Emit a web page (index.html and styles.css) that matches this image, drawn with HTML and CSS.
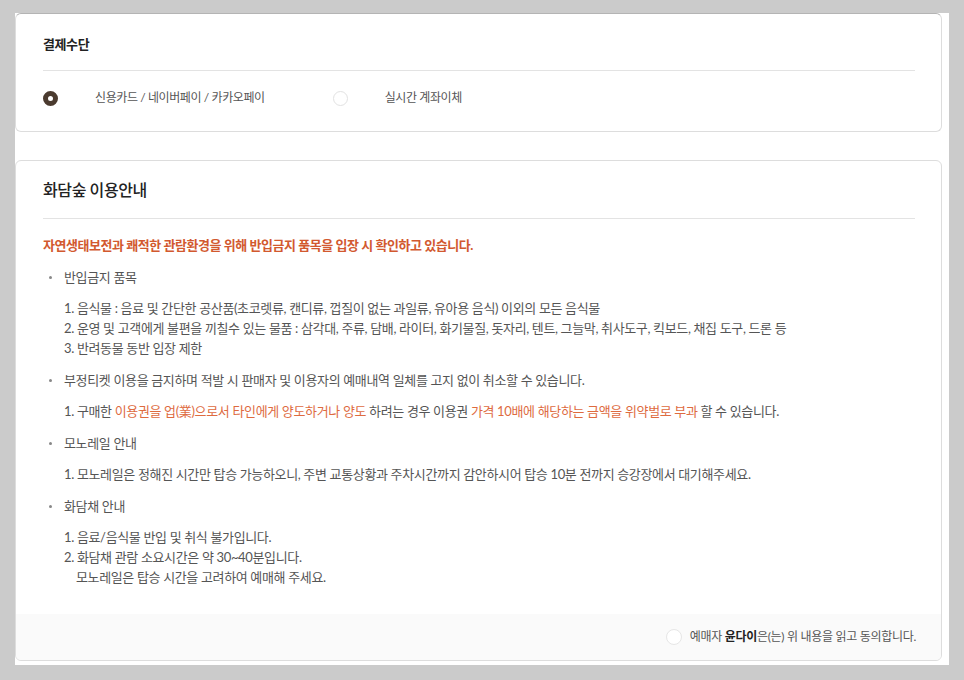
FILE: index.html
```html
<!DOCTYPE html>
<html lang="ko">
<head>
    <meta charset="UTF-8">
    <meta name="viewport" content="width=device-width, initial-scale=1.0">
    <title>예매 - 결제수단</title>
    <link rel="stylesheet" href="styles.css">
</head>
<body>
    <div class="wrap">
        <section class="card pay-card">
            <h2 class="pay-title">결제수단</h2>
            <div class="pay-options">
                <label class="option">
                    <span class="radio checked"></span>
                    <span>신용카드 / 네이버페이 / 카카오페이</span>
                </label>
                <label class="option">
                    <span class="radio"></span>
                    <span>실시간 계좌이체</span>
                </label>
            </div>
        </section>

        <section class="card guide-card">
            <div class="guide-body">
                <h2 class="guide-title">화담숲 이용안내</h2>
                <p class="notice">자연생태보전과 쾌적한 관람환경을 위해 반입금지 품목을 입장 시 확인하고 있습니다.</p>
                <ul class="guide-list">
                    <li>
                        <p class="item">반입금지 품목</p>
                        <ol class="sub">
                            <li>1. 음식물 : 음료 및 간단한 공산품(초코렛류, 캔디류, 껍질이 없는 과일류, 유아용 음식) 이외의 모든 음식물</li>
                            <li>2. 운영 및 고객에게 불편을 끼칠수 있는 물품 : 삼각대, 주류, 담배, 라이터, 화기물질, 돗자리, 텐트, 그늘막, 취사도구, 킥보드, 채집 도구, 드론 등</li>
                            <li>3. 반려동물 동반 입장 제한</li>
                        </ol>
                    </li>
                    <li>
                        <p class="item">부정티켓 이용을 금지하며 적발 시 판매자 및 이용자의 예매내역 일체를 고지 없이 취소할 수 있습니다.</p>
                        <ol class="sub">
                            <li>1. 구매한 <span class="hl">이용권을 업(業)으로서 타인에게 양도하거나 양도</span> 하려는 경우 이용권 <span class="hl">가격 10배에 해당하는 금액을 위약벌로 부과</span> 할 수 있습니다.</li>
                        </ol>
                    </li>
                    <li>
                        <p class="item">모노레일 안내</p>
                        <ol class="sub">
                            <li>1. 모노레일은 정해진 시간만 탑승 가능하오니, 주변 교통상황과 주차시간까지 감안하시어 탑승 10분 전까지 승강장에서 대기해주세요.</li>
                        </ol>
                    </li>
                    <li>
                        <p class="item">화담채 안내</p>
                        <ol class="sub">
                            <li>1. 음료/음식물 반입 및 취식 불가입니다.</li>
                            <li>2. 화담채 관람 소요시간은 약 30~40분입니다.<br>&nbsp;&nbsp;&nbsp;&nbsp;모노레일은 탑승 시간을 고려하여 예매해 주세요.</li>
                        </ol>
                    </li>
                </ul>
            </div>
            <div class="agree">
                <label class="option">
                    <span class="radio small"></span>
                    <span>예매자 <strong>윤다이</strong>은(는) 위 내용을 읽고 동의합니다.</span>
                </label>
            </div>
        </section>
    </div>
</body>
</html>
```

FILE: styles.css
```css
* {
    box-sizing: border-box;
}

body {
    margin: 0;
    background-color: #cbcbcb;
    font-family: Lato, "Noto Sans CJK KR", sans-serif;
    color: #555;
    font-size: 12px;
    letter-spacing: -0.4px;
}

.wrap {
    margin: 13px 0 0 15px;
    width: 934px;
    height: 652px;
    background-color: #fff;
    padding-right: 7px;
}

.card {
    border: 1px solid #ddd;
    border-radius: 6px;
    background-color: #fff;
}

.pay-card {
    height: 119px;
    padding: 0 26px 0 27px;
    border-top-color: #b4b4b4;
}

.pay-title {
    margin: 0;
    padding: 21px 0 17px;
    font-size: 13px;
    line-height: 18px;
    font-weight: bold;
    color: #222;
    border-bottom: 1px solid #e3e3e3;
}

.pay-options {
    display: flex;
    padding-top: 19px;
}

.option {
    display: flex;
    align-items: center;
    gap: 37px;
    line-height: 16px;
    margin-right: 68px;
}

.radio {
    display: inline-block;
    flex-shrink: 0;
    width: 15px;
    height: 15px;
    border-radius: 50%;
    border: 1px solid #e2e2e2;
    background-color: #fff;
}

.radio.checked {
    border: 5px solid #4b3b2f;
}

.guide-card {
    margin-top: 28px;
    height: 501px;
    display: flex;
    flex-direction: column;
    justify-content: space-between;
    overflow: hidden;
    font-size: 13px;
    letter-spacing: -0.35px;
}

.guide-body {
    padding: 19px 26px 0 27px;
}

.guide-title {
    margin: 0;
    padding-bottom: 18px;
    font-size: 16px;
    line-height: 20px;
    font-weight: 500;
    color: #222;
    letter-spacing: -0.4px;
    border-bottom: 1px solid #e3e3e3;
}

.notice {
    margin: 16px 0 0;
    line-height: 20px;
    font-weight: bold;
    color: #d2592f;
    letter-spacing: -0.45px;
}

.guide-list {
    list-style: none;
    margin: 0;
    padding: 0;
}

.guide-list > li {
    margin-top: 12px;
}

.item {
    position: relative;
    margin: 0;
    padding-left: 21px;
    line-height: 20px;
}

.item::before {
    content: "";
    position: absolute;
    left: 6px;
    top: 9px;
    width: 3px;
    height: 3px;
    border-radius: 50%;
    background-color: #888;
}

.sub {
    list-style: none;
    margin: 11px 0 0;
    padding-left: 21px;
    line-height: 20px;
}

.hl {
    color: #de6b3f;
}

.agree {
    display: flex;
    justify-content: flex-end;
    align-items: center;
    height: 46px;
    padding-right: 25px;
    background-color: #fafafa;
    font-size: 12px;
    letter-spacing: -0.3px;
}

.agree .option {
    gap: 8px;
    margin-right: 0;
}

.radio.small {
    width: 16px;
    height: 16px;
    border-color: #e6e6e6;
}

.agree strong {
    color: #222;
}
```
